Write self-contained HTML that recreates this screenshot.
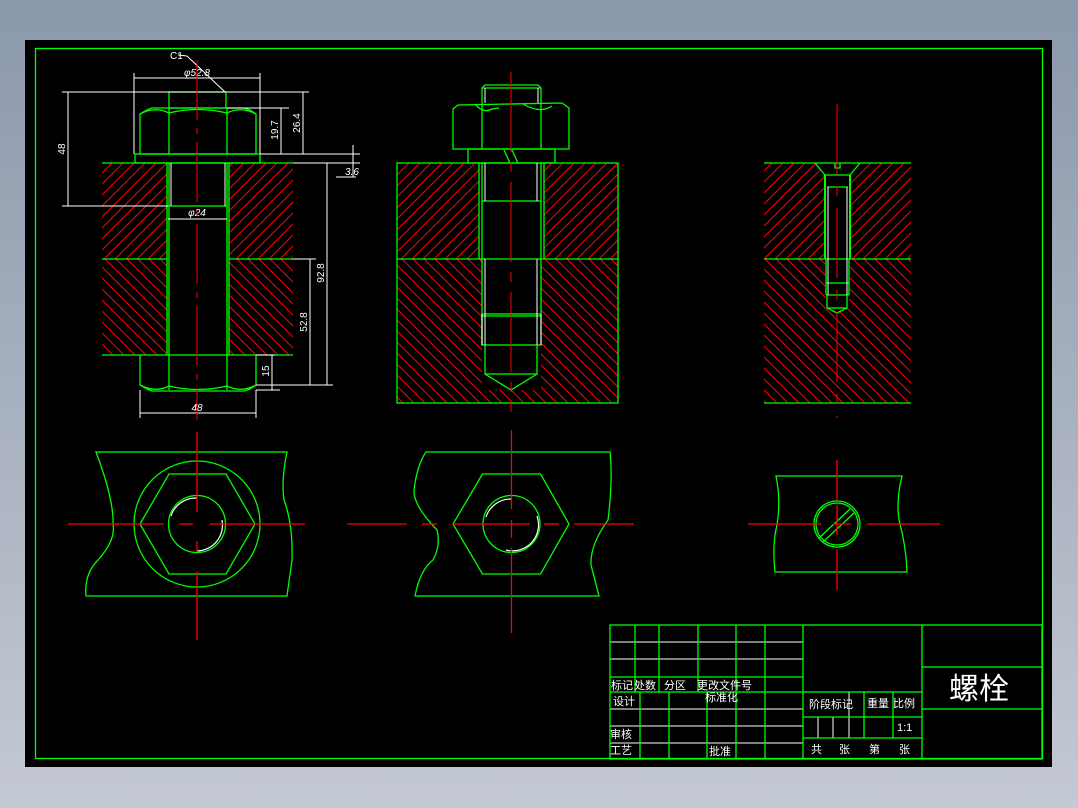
<!DOCTYPE html>
<html><head><meta charset="utf-8"><style>
html,body{margin:0;padding:0;width:1078px;height:808px;overflow:hidden;background:linear-gradient(#8b98ab,#c4c9d3);}
svg{display:block}
text{font-family:"Liberation Sans","Noto Sans CJK SC",sans-serif;fill:#fff}
</style></head><body>
<svg width="1078" height="808" viewBox="0 0 1078 808" xmlns="http://www.w3.org/2000/svg">
<defs>
<pattern id="hu" width="11" height="11" patternUnits="userSpaceOnUse"><path d="M-1,12 L12,-1 M-2,2 L2,-2 M9,13 L13,9" stroke="#ff0000" stroke-width="1"/></pattern>
<pattern id="hd" width="11" height="11" patternUnits="userSpaceOnUse"><path d="M-1,-1 L12,12 M9,-2 L13,2 M-2,9 L2,13" stroke="#ff0000" stroke-width="1"/></pattern>
</defs>
<rect x="25" y="40" width="1027" height="727" fill="#000"/>
<rect x="35.5" y="48.5" width="1007" height="710" fill="none" stroke="#00ff00" stroke-width="1.3"/>

<!-- ===== LEFT DRAWING ===== -->
<rect x="102" y="163" width="65" height="96" fill="url(#hu)"/>
<rect x="229" y="163" width="64" height="96" fill="url(#hu)"/>
<rect x="102" y="259" width="65" height="96" fill="url(#hd)"/>
<rect x="229" y="259" width="64" height="96" fill="url(#hd)"/>
<g stroke="#00ff00" stroke-width="1.3" fill="none">
<line x1="102" y1="163" x2="293" y2="163"/>
<line x1="102" y1="259" x2="167" y2="259"/><line x1="229" y1="259" x2="293" y2="259"/>
<line x1="102" y1="355" x2="293" y2="355"/>
<line x1="167" y1="163" x2="167" y2="355"/><line x1="229" y1="163" x2="229" y2="355"/>
<line x1="169" y1="163" x2="169" y2="390"/><line x1="227" y1="163" x2="227" y2="390"/>
<rect x="135" y="154" width="125" height="9"/>
<path d="M140,154 L140,114 L147,110 L152,108 L244,108 L250,110 L256,114 L256,154 Z"/>
<path d="M140,114 Q155,106 169,113 Q197,106 227,113 Q241,106 256,114"/>
<line x1="169" y1="108" x2="169" y2="154"/><line x1="227" y1="108" x2="227" y2="154"/>
<rect x="169" y="92" width="57" height="16"/>
<path d="M140,355 L140,385 L147,389 L152,391 L244,391 L250,389 L256,385 L256,355"/>
<path d="M140,385 Q155,393 169,386 Q197,393 227,386 Q241,393 256,385"/>
<line x1="168" y1="206" x2="227" y2="206"/>
</g>
<g stroke="#fff" stroke-width="1" fill="none">
<line x1="171" y1="163" x2="171" y2="206"/><line x1="225" y1="163" x2="225" y2="206"/>
<line x1="134" y1="78" x2="260" y2="78"/>
<line x1="134" y1="73" x2="134" y2="154"/><line x1="260" y1="73" x2="260" y2="154"/>
<line x1="187" y1="56" x2="225" y2="92"/><line x1="178" y1="55" x2="187" y2="56"/>
<line x1="62" y1="92" x2="309" y2="92"/>
<line x1="62" y1="206" x2="168" y2="206"/>
<line x1="68" y1="92" x2="68" y2="206"/>
<line x1="227" y1="108" x2="289" y2="108"/>
<line x1="281" y1="108" x2="281" y2="154"/>
<line x1="303" y1="92" x2="303" y2="154"/>
<line x1="260" y1="154" x2="360" y2="154"/><line x1="293" y1="163" x2="360" y2="163"/>
<line x1="353" y1="145" x2="353" y2="177"/><line x1="336" y1="177" x2="356" y2="177"/>
<line x1="327" y1="163" x2="327" y2="385"/>
<line x1="293" y1="259" x2="316" y2="259"/>
<line x1="310" y1="259" x2="310" y2="385"/>
<line x1="256" y1="355" x2="275" y2="355"/>
<line x1="272" y1="355" x2="272" y2="390"/>
<line x1="256" y1="385" x2="333" y2="385"/>
<line x1="256" y1="390" x2="280" y2="390"/>
<line x1="140" y1="390" x2="140" y2="418"/><line x1="256" y1="390" x2="256" y2="418"/>
<line x1="140" y1="413" x2="256" y2="413"/>
<line x1="168" y1="219" x2="227" y2="219"/>
</g>
<g font-size="10">
<text x="170" y="59">C1</text>
<text x="197" y="76" text-anchor="middle" font-style="italic">φ52.8</text>
<text x="197" y="216" text-anchor="middle" font-style="italic">φ24</text>
<text x="197" y="411" text-anchor="middle" font-style="italic">48</text>
<text x="345" y="175" font-style="italic">3.6</text>
<text transform="translate(65,149) rotate(-90)" text-anchor="middle">48</text>
<text transform="translate(278,130) rotate(-90)" text-anchor="middle">19.7</text>
<text transform="translate(300,123) rotate(-90)" text-anchor="middle">26.4</text>
<text transform="translate(324,273) rotate(-90)" text-anchor="middle">92.8</text>
<text transform="translate(307,322) rotate(-90)" text-anchor="middle">52.8</text>
<text transform="translate(269,371) rotate(-90)" text-anchor="middle">15</text>
</g>
<line x1="197" y1="60" x2="197" y2="420" stroke="#ff0000" stroke-width="1" stroke-dasharray="60,8,6,8"/>

<!-- ===== MIDDLE DRAWING ===== -->
<rect x="397" y="163" width="82" height="96" fill="url(#hu)"/>
<rect x="544" y="163" width="74" height="96" fill="url(#hu)"/>
<rect x="397" y="259" width="85" height="144" fill="url(#hd)"/>
<rect x="541" y="259" width="77" height="144" fill="url(#hd)"/>
<rect x="482" y="374" width="59" height="29" fill="url(#hd)"/>
<path d="M485,374 L511,390 L537,374 L541,374 L541,403 L482,403 L482,374 Z" fill="#000"/>
<rect x="482" y="390" width="59" height="13" fill="url(#hd)"/>
<path d="M485,374 L511,390 L537,374 Z" fill="#000"/>
<g stroke="#00ff00" stroke-width="1.3" fill="none">
<rect x="397" y="163" width="221" height="240"/>
<line x1="397" y1="259" x2="618" y2="259"/>
<line x1="479" y1="163" x2="479" y2="259"/><line x1="544" y1="163" x2="544" y2="259"/>
<line x1="482" y1="163" x2="482" y2="345"/><line x1="541" y1="163" x2="541" y2="314"/>
<line x1="482" y1="201" x2="541" y2="201"/>
<rect x="482" y="314" width="59" height="31"/>
<line x1="482" y1="316" x2="541" y2="316"/>
<path d="M485,345 L485,374 L511,390 L537,374 L537,345"/>
<line x1="485" y1="374" x2="537" y2="374"/>
<path d="M453,149 L453,109 L458,105 L562,103 L569,108 L569,149 Z"/>
<path d="M475,104 Q483,114 492,109 L499,108 M523,104 Q540,114 552,106"/>
<line x1="482" y1="103" x2="482" y2="149"/><line x1="541" y1="103" x2="541" y2="149"/>
<path d="M482,103 L482,88 L485,85 L538,85 L541,88 L541,103"/>
<line x1="482" y1="88" x2="541" y2="88"/>
<rect x="468" y="149" width="87" height="14"/>
<path d="M504,150 L510,163 M512,150 L518,163"/>
</g>
<g stroke="#fff" stroke-width="1">
<line x1="485" y1="88" x2="485" y2="103"/><line x1="538" y1="88" x2="538" y2="103"/>
<line x1="485" y1="163" x2="485" y2="201"/><line x1="537" y1="163" x2="537" y2="201"/>
<line x1="485" y1="259" x2="485" y2="345"/><line x1="537" y1="259" x2="537" y2="345"/>
<line x1="482" y1="314" x2="482" y2="345"/><line x1="541" y1="314" x2="541" y2="345"/>
</g>
<line x1="511" y1="72" x2="511" y2="412" stroke="#ff0000" stroke-width="1" stroke-dasharray="80,10,10,10"/>

<!-- ===== RIGHT DRAWING ===== -->
<rect x="764" y="163" width="147" height="96" fill="url(#hu)"/>
<rect x="764" y="259" width="147" height="144" fill="url(#hd)"/>
<path d="M815,163 L825,175 L825,295 L827,308 L837,313 L847,308 L850,295 L850,175 L860,163 Z" fill="#000"/>
<g stroke="#00ff00" stroke-width="1.3" fill="none">
<line x1="764" y1="163" x2="911" y2="163"/><line x1="764" y1="259" x2="911" y2="259"/>
<line x1="764" y1="403" x2="911" y2="403"/>
<path d="M815,163 L825,175 L850,175 L860,163"/>
<path d="M835,163 L835,168 L840,168 L840,163"/>
<line x1="825" y1="175" x2="825" y2="259" stroke-width="2"/><line x1="850" y1="175" x2="850" y2="259" stroke-width="2"/>
<line x1="826" y1="259" x2="826" y2="295"/><line x1="849" y1="259" x2="849" y2="295"/>
<line x1="827" y1="187" x2="848" y2="187"/>
<line x1="826" y1="283" x2="849" y2="283"/><line x1="826" y1="295" x2="849" y2="295"/>
<path d="M827,295 L827,308 L837,313 L847,308 L847,295"/>
<line x1="827" y1="308" x2="847" y2="308"/>
</g>
<g stroke="#fff" stroke-width="1"><line x1="828" y1="187" x2="828" y2="295"/><line x1="847" y1="187" x2="847" y2="295"/></g>
<line x1="837" y1="104" x2="837" y2="418" stroke="#ff0000" stroke-width="1" stroke-dasharray="70,12,10,12"/>

<!-- ===== BOTTOM LEFT VIEW ===== -->
<g stroke="#00ff00" stroke-width="1.3" fill="none">
<path d="M96,452 L287,452 Q281,480 284,500 Q293,524 292,560 L287,596 L86,596 Q84,574 98,560 Q116,540 113,524 Q114,500 96,452 Z"/>
<circle cx="197" cy="524" r="63"/>
<path d="M169,474 L226,474 L255,524 L226,574 L169,574 L140,524 Z"/>
<circle cx="197" cy="524" r="28.5"/>
</g>
<path d="M171,516 A26,26 0 0 1 197,498 M222,520 A26,26 0 0 1 197,551" stroke="#fff" stroke-width="1.2" fill="none"/>
<g stroke="#ff0000" stroke-width="1.3">
<line x1="68" y1="524" x2="164" y2="524"/><line x1="179" y1="524" x2="193" y2="524"/><line x1="210" y1="524" x2="305" y2="524"/>
<line x1="197" y1="432" x2="197" y2="512"/><line x1="197" y1="541" x2="197" y2="552"/><line x1="197" y1="572" x2="197" y2="640"/>
</g>

<!-- ===== BOTTOM MIDDLE VIEW ===== -->
<g stroke="#00ff00" stroke-width="1.3" fill="none">
<path d="M426,452 L610,452 Q613,480 608,520 Q590,545 591,565 L599,596 L415,596 Q420,570 433,560 Q441,545 437,530 Q413,505 414,490 Q417,465 426,452 Z"/>
<path d="M482.5,474 L540.5,474 L569,524 L540.5,574 L482.5,574 L453,524 Z"/>
<circle cx="511.5" cy="524" r="28.5"/>
</g>
<path d="M486,517 A26,26 0 0 1 511,499 M537,516 A26,26 0 0 1 506,550" stroke="#fff" stroke-width="1.2" fill="none"/>
<g stroke="#ff0000" stroke-width="1.3">
<line x1="347" y1="524" x2="407" y2="524"/><line x1="422" y1="524" x2="437" y2="524"/><line x1="452" y1="524" x2="530" y2="524"/><line x1="544" y1="524" x2="559" y2="524"/><line x1="574" y1="524" x2="634" y2="524"/>
<line x1="511.5" y1="430" x2="511.5" y2="509"/><line x1="511.5" y1="520" x2="511.5" y2="538"/><line x1="511.5" y1="548" x2="511.5" y2="633"/>
</g>

<!-- ===== BOTTOM RIGHT VIEW ===== -->
<g stroke="#00ff00" stroke-width="1.3" fill="none">
<path d="M776,476 L902,476 Q896,500 899,520 Q906,545 907,572 L775,572 Q772,545 777,525 Q781,500 776,476 Z"/>
<circle cx="837" cy="524" r="23"/><circle cx="837" cy="524" r="21"/>
<line x1="819" y1="538" x2="850" y2="509"/><line x1="823" y1="542" x2="854" y2="513"/>
</g>
<g stroke="#ff0000" stroke-width="1.3">
<line x1="748" y1="524" x2="821" y2="524"/><line x1="833" y1="524" x2="851" y2="524"/><line x1="867" y1="524" x2="940" y2="524"/>
<line x1="837" y1="460" x2="837" y2="500"/><line x1="837" y1="505" x2="837" y2="535"/><line x1="837" y1="549" x2="837" y2="590"/>
</g>

<!-- ===== TITLE BLOCK ===== -->
<g stroke="#fff" stroke-width="1">
<line x1="610" y1="642" x2="803" y2="642"/><line x1="610" y1="659" x2="803" y2="659"/>
<line x1="610" y1="709" x2="803" y2="709"/><line x1="610" y1="726" x2="803" y2="726"/><line x1="610" y1="743" x2="803" y2="743"/>
<line x1="818" y1="717" x2="818" y2="738"/><line x1="833" y1="717" x2="833" y2="738"/><line x1="849" y1="692" x2="849" y2="738"/>
</g>
<g stroke="#00ff00" stroke-width="1.3" fill="none">
<rect x="610" y="625" width="432" height="134"/>
<line x1="610" y1="677" x2="803" y2="677"/><line x1="610" y1="692" x2="922" y2="692"/>
<line x1="635" y1="625" x2="635" y2="692"/><line x1="659" y1="625" x2="659" y2="692"/><line x1="698" y1="625" x2="698" y2="692"/>
<line x1="640" y1="692" x2="640" y2="759"/><line x1="669" y1="692" x2="669" y2="759"/><line x1="707" y1="692" x2="707" y2="759"/>
<line x1="736" y1="625" x2="736" y2="759"/><line x1="765" y1="625" x2="765" y2="759"/>
<line x1="803" y1="625" x2="803" y2="759"/><line x1="922" y1="625" x2="922" y2="759"/>
<line x1="803" y1="717" x2="922" y2="717"/><line x1="803" y1="738" x2="922" y2="738"/>
<line x1="864" y1="692" x2="864" y2="738"/><line x1="893" y1="692" x2="893" y2="738"/>
<line x1="922" y1="667" x2="1042" y2="667"/><line x1="922" y1="709" x2="1042" y2="709"/>
</g>
<g font-size="11">
<text x="611" y="689">标记</text><text x="634" y="689">处数</text><text x="664" y="689">分区</text><text x="697" y="689">更改文件号</text>
<text x="613" y="705">设计</text><text x="705" y="701">标准化</text>
<text x="610" y="738">审核</text><text x="610" y="754">工艺</text><text x="709" y="755">批准</text>
<text x="809" y="708">阶段标记</text><text x="867" y="707">重量</text><text x="893" y="707">比例</text>
<text x="897" y="731">1:1</text>
<text x="811" y="753">共</text><text x="839" y="753">张</text><text x="869" y="753">第</text><text x="899" y="753">张</text>
<text x="949" y="699" font-size="30">螺栓</text>
</g>
</svg>
</body></html>
